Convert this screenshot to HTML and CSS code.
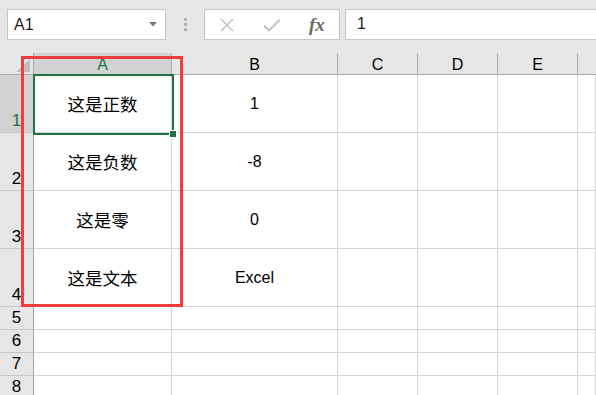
FILE: index.html
```html
<!DOCTYPE html>
<html>

<head>
    <title>Sheet</title>
    <link rel="stylesheet" href="styles.css">
</head>

<body>

    <div class="toolbar">
        <div class="namebox">
            <span>A1</span>
            <svg class="drop" width="8" height="5" viewBox="0 0 8 5"><path d="M0 0H8L4 4.5Z" fill="#7a7a7a"/></svg>
        </div>
        <div class="grip"><i></i><i></i><i></i></div>
        <div class="fxbox">
            <svg width="16" height="16" viewBox="0 0 16 16"><path d="M2 2L14 14M14 2L2 14" stroke="#c4c4c4" stroke-width="1.6" fill="none"/></svg>
            <svg width="18" height="16" viewBox="0 0 18 16"><path d="M1 8.5L6 13.5L17 2.5" stroke="#c4c4c4" stroke-width="2.2" fill="none"/></svg>
            <span class="fx">fx</span>
        </div>
        <div class="formula">1</div>
    </div>

    <div class="sheet">
        <div class="corner"><span class="tri"></span></div>
        <div class="colhead selected">A</div>
        <div class="colhead">B</div>
        <div class="colhead">C</div>
        <div class="colhead">D</div>
        <div class="colhead">E</div>
        <div class="colhead last"></div>

        <div class="rowhead selected">1</div>
        <div class="cell zh">这是正数</div>
        <div class="cell">1</div>
        <div class="cell"></div><div class="cell"></div><div class="cell"></div><div class="cell"></div>

        <div class="rowhead">2</div>
        <div class="cell zh">这是负数</div>
        <div class="cell">-8</div>
        <div class="cell"></div><div class="cell"></div><div class="cell"></div><div class="cell"></div>

        <div class="rowhead">3</div>
        <div class="cell zh">这是零</div>
        <div class="cell">0</div>
        <div class="cell"></div><div class="cell"></div><div class="cell"></div><div class="cell"></div>

        <div class="rowhead">4</div>
        <div class="cell zh">这是文本</div>
        <div class="cell">Excel</div>
        <div class="cell"></div><div class="cell"></div><div class="cell"></div><div class="cell"></div>

        <div class="rowhead">5</div>
        <div class="cell"></div><div class="cell"></div><div class="cell"></div><div class="cell"></div><div class="cell"></div><div class="cell"></div>
        <div class="rowhead">6</div>
        <div class="cell"></div><div class="cell"></div><div class="cell"></div><div class="cell"></div><div class="cell"></div><div class="cell"></div>
        <div class="rowhead">7</div>
        <div class="cell"></div><div class="cell"></div><div class="cell"></div><div class="cell"></div><div class="cell"></div><div class="cell"></div>
        <div class="rowhead">8</div>
        <div class="cell"></div><div class="cell"></div><div class="cell"></div><div class="cell"></div><div class="cell"></div><div class="cell"></div>

        <div class="selection"><span class="handle"></span></div>
        <div class="highlight"></div>
    </div>

</body>

</html>
```

FILE: styles.css
```css
* {
    box-sizing: border-box;
}

body {
    margin: 0;
    width: 596px;
    height: 395px;
    overflow: hidden;
    background-color: #e6e6e6;
    font-family: "Liberation Sans", "Noto Sans CJK SC", sans-serif;
    font-size: 16px;
    color: #000;
}

.toolbar {
    display: flex;
    align-items: center;
    height: 53px;
    padding: 0 0 4px 7px;
}

.namebox {
    display: flex;
    align-items: center;
    justify-content: space-between;
    width: 159px;
    height: 31px;
    padding: 0 8px 0 6px;
    background-color: #fff;
    border: 1px solid #c6c6c6;
    font-size: 16px;
    color: #222;
}

.grip {
    display: flex;
    flex-direction: column;
    gap: 2px;
    width: 38px;
    align-items: center;
}

.grip i {
    display: block;
    width: 3px;
    height: 3px;
    background-color: #b3b3b3;
}

.fxbox {
    display: flex;
    align-items: center;
    gap: 28px;
    width: 136px;
    height: 31px;
    padding-left: 14px;
    background-color: #fff;
    border: 1px solid #c6c6c6;
}

.fx {
    font-family: "Liberation Serif", serif;
    font-style: italic;
    font-weight: bold;
    font-size: 19px;
    color: #6a6a6a;
    margin-left: 0;
}

.formula {
    flex: 1;
    height: 31px;
    margin-left: 5px;
    padding: 5px 0 0 11px;
    background-color: #fff;
    border: 1px solid #c6c6c6;
    border-right: none;
    color: #222;
}

.sheet {
    position: relative;
    display: grid;
    grid-template-columns: 34px 138px 166px 80px 80px 80px 1fr;
    grid-template-rows: 22px 58px 58px 58px 58px 23px 23px 23px 23px;
    background-color: #fff;
}

.corner {
    position: relative;
    background-color: #e6e6e6;
    border-right: 1px solid #ababab;
    border-bottom: 1px solid #ababab;
}

.tri {
    position: absolute;
    right: 3px;
    bottom: 2px;
    width: 0;
    height: 0;
    border-left: 14px solid transparent;
    border-bottom: 13px solid #bdbdbd;
}

.colhead {
    display: flex;
    align-items: center;
    justify-content: center;
    background-color: #e6e6e6;
    border-right: 1px solid #ababab;
    border-bottom: 1px solid #ababab;
    padding-top: 2px;
}

.colhead.last {
    border-right: none;
}

.rowhead {
    display: flex;
    align-items: flex-end;
    justify-content: center;
    background-color: #e6e6e6;
    border-right: 1px solid #a6a6a6;
    border-bottom: 1px solid #c8c8c8;
    padding-bottom: 1px;
    font-size: 17px;
}

.selected {
    background-color: #d2d2d2;
    color: #217346;
}

.cell {
    display: flex;
    align-items: center;
    justify-content: center;
    border-right: 1px solid #d4d4d4;
    border-bottom: 1px solid #d4d4d4;
}

.cell.zh {
    font-size: 17.5px;
}

.selection {
    position: absolute;
    left: 33px;
    top: 21px;
    width: 141px;
    height: 61px;
    border: 2px solid #217346;
}

.handle {
    position: absolute;
    right: -4px;
    bottom: -4px;
    width: 6px;
    height: 6px;
    background-color: #217346;
    border: 1px solid #fff;
    box-sizing: content-box;
    margin: -1px;
}

.highlight {
    position: absolute;
    left: 21px;
    top: 3px;
    width: 162px;
    height: 251px;
    border: 3px solid #f23d3d;
}
```
